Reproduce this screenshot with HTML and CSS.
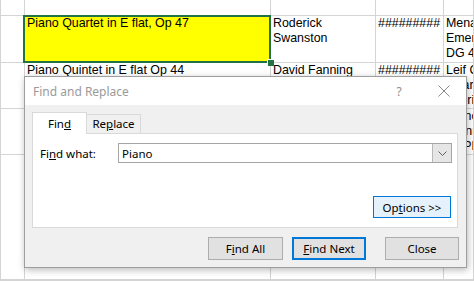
FILE: index.html
```html
<!DOCTYPE html>
<html>
<head>
<meta charset="utf-8">
<link rel="stylesheet" href="styles.css">
</head>
<body>
<div class="grid">
  <div class="cell"></div><div class="cell"></div><div class="cell"></div><div class="cell"></div><div class="cell"></div>

  <div class="cell"></div>
  <div class="cell sel">Piano Quartet in E flat, Op 47</div>
  <div class="cell">Roderick<br>Swanston</div>
  <div class="cell">#########</div>
  <div class="cell">Menahem Pressler<br>Emerson Quartet<br>DG 474 534-2</div>

  <div class="cell"></div>
  <div class="cell">Piano Quintet in E flat Op 44</div>
  <div class="cell">David Fanning</div>
  <div class="cell">#########</div>
  <div class="cell">Leif Ove Andsnes<br>Quartet<br>Amiri</div>

  <div class="cell"></div>
  <div class="cell">Piano Trio in D minor Op 63</div>
  <div class="cell">Roderick<br>Swanston</div>
  <div class="cell">#########</div>
  <div class="cell">France<br>Glenn<br>ARPEGE</div>

  <div class="cell"></div><div class="cell"></div><div class="cell"></div><div class="cell"></div><div class="cell"></div>
  <div class="cell"></div><div class="cell"></div><div class="cell"></div><div class="cell"></div><div class="cell"></div>
</div>

<div class="dialog">
  <div class="titlebar">
    <span class="title">Find and Replace</span>
    <span class="help">?</span>
    <span class="closex">
      <svg width="12" height="12" viewBox="0 0 12 12"><path d="M0.5 0.5 L11.5 11.5 M11.5 0.5 L0.5 11.5" stroke="#8a8a8a" stroke-width="1" fill="none"/></svg>
    </span>
  </div>
  <div class="dbody">
    <div class="tabs">
      <div class="tab active">Fin<u>d</u></div>
      <div class="tab">Re<u>p</u>lace</div>
    </div>
    <div class="panel">
      <div class="findrow">
        <span class="label">Fi<u>n</u>d what:</span>
        <div class="combo">
          <span class="value">Piano</span>
          <span class="drop">
            <svg width="9" height="5" viewBox="0 0 9 5"><path d="M0.5 0.5 L4.5 4.5 L8.5 0.5" stroke="#606060" stroke-width="1" fill="none"/></svg>
          </span>
        </div>
      </div>
      <div class="optrow">
        <div class="btn options">Op<u>t</u>ions &gt;&gt;</div>
      </div>
    </div>
    <div class="actions">
      <div class="btn findall">F<u>i</u>nd All</div>
      <div class="btn findnext"><u>F</u>ind Next</div>
      <div class="btn closeb">Close</div>
    </div>
  </div>
</div>
</body>
</html>
```

FILE: styles.css
```css
* { box-sizing: border-box; }
html, body { margin: 0; padding: 0; background: #fff; }
body {
  width: 474px;
  height: 281px;
  overflow: hidden;
  position: relative;
  font-family: "Liberation Sans", Arial, sans-serif;
}

.grid {
  display: grid;
  grid-template-columns: 24px 246px 105px 68px 1fr;
  grid-template-rows: 16px 47px 46px 46px 125px 1fr;
  border-left: 1px solid #d4d4d4;
  height: 100%;
}
.cell {
  border-right: 1px solid #d4d4d4;
  border-bottom: 1px solid #d4d4d4;
  padding: 0 2px;
  font-size: 12.4px;
  line-height: 15px;
  color: #000;
  overflow: hidden;
  white-space: nowrap;
}
.cell.sel {
  background: #ffff00;
  position: relative;
  overflow: visible;
}
.cell.sel::after {
  content: "";
  position: absolute;
  left: -2px;
  top: -1px;
  right: -1px;
  bottom: -1px;
  border: 2px solid #217346;
}
.cell.sel::before {
  content: "";
  position: absolute;
  right: -4px;
  bottom: -4px;
  width: 6px;
  height: 6px;
  background: #217346;
  border-left: 1px solid #fff;
  border-top: 1px solid #fff;
  z-index: 1;
}

.dialog {
  position: absolute;
  left: 24px;
  top: 76px;
  width: 443px;
  height: 192px;
  border: 1px solid #9e9e9e;
  background: #f0f0f0;
  box-shadow: 1px 2px 7px rgba(0, 0, 0, 0.28);
  font-family: "Noto Sans", sans-serif;
  font-size: 11.5px;
  color: #000;
  display: flex;
  flex-direction: column;
}
.titlebar {
  height: 28px;
  background: #fff;
  display: flex;
  align-items: center;
  padding-left: 8px;
  color: #9a9a9a;
}
.title { flex: 1; font-size: 12px; }
.help {
  width: 28px;
  margin-right: 8px;
  text-align: center;
  font-size: 12px;
  color: #8f8f8f;
}
.closex {
  width: 45px;
  height: 28px;
  display: flex;
  align-items: center;
  justify-content: center;
}

.dbody {
  flex: 1;
  padding: 7px 7px 0 7px;
  display: flex;
  flex-direction: column;
}
.tabs {
  display: flex;
  align-items: flex-end;
  height: 21px;
}
.tab {
  height: 19px;
  width: 54px;
  border: 1px solid #d9d9d9;
  border-left: none;
  border-bottom: none;
  text-align: center;
  line-height: 18px;
}
.tab.active {
  height: 22px;
  width: 55px;
  border-left: 1px solid #d9d9d9;
  background: #fff;
  position: relative;
  z-index: 1;
  margin-bottom: -1px;
  line-height: 21px;
}
.panel {
  height: 95px;
  margin-right: 1px;
  border: 1px solid #d9d9d9;
  background: #fff;
  padding: 9px 5px 0 7px;
}
.findrow {
  display: flex;
  align-items: center;
}
.label { width: 78px; }
.combo {
  flex: 1;
  height: 20px;
  border: 1px solid #a5a5a5;
  display: flex;
  align-items: center;
}
.value { flex: 1; padding-left: 3px; }
.drop {
  width: 19px;
  height: 18px;
  background: #e6e6e6;
  border-left: 1px solid #b8b8b8;
  display: flex;
  align-items: center;
  justify-content: center;
}
.optrow {
  display: flex;
  justify-content: flex-end;
  margin-top: 33px;
  padding-right: 1px;
}
.btn {
  height: 23px;
  border: 1px solid #adadad;
  background: #e1e1e1;
  display: flex;
  align-items: center;
  justify-content: center;
}
.btn.options {
  width: 78px;
  height: 22px;
  background: #e5f1fb;
  border-color: #0078d7;
}
.actions {
  display: flex;
  justify-content: flex-end;
  margin-top: 9px;
}
.findall { width: 75px; }
.findnext { width: 74px; margin-left: 9px; border: 2px solid #0078d7; }
.closeb { width: 74px; margin-left: 19px; }
u { text-decoration-thickness: 1px; text-underline-offset: 1px; }
```
